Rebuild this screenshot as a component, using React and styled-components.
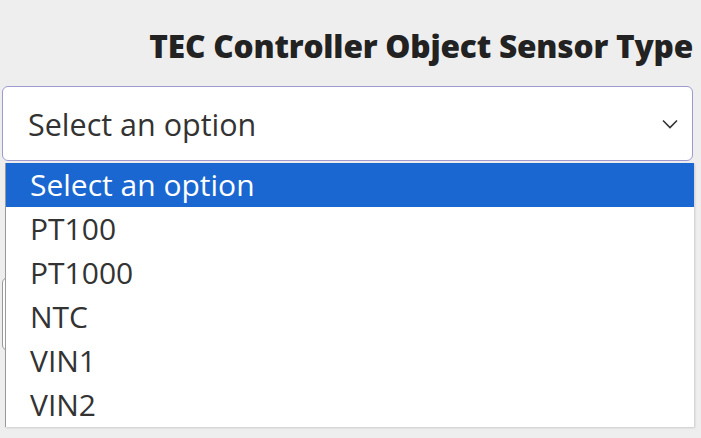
import styled, { createGlobalStyle } from 'styled-components'

const GlobalStyle = createGlobalStyle`
    html, body {
        margin: 0;
        padding: 0;
        background: #eeeeee;
        font-family: "Open Sans", "Noto Sans", sans-serif;
        overflow: hidden;
    }
`

const Page = styled.div`
    width: 701px;
    height: 438px;
    position: relative;
    box-sizing: border-box;
    padding: 27px 8px 0 2px;
`

const Title = styled.h2`
    margin: 0;
    text-align: right;
    font-size: 31.6px;
    font-weight: 800;
    letter-spacing: -0.2px;
    color: #222;
    line-height: 38px;
`

const Field = styled.div`
    position: relative;
    margin-top: 21px;
`

const SelectBox = styled.div`
    box-sizing: border-box;
    height: 75px;
    background: #fff;
    border: 1.5px solid #9e9ad0;
    border-radius: 6px;
    display: flex;
    align-items: center;
    justify-content: space-between;
    padding: 0 14px 0 25px;
    font-size: 30.5px;
    color: #333;
`

const Chevron = () => (
    <svg width="16" height="10" viewBox="0 0 16 10" fill="none">
        <path d="M1 1.5 L8 8.5 L15 1.5" stroke="#333" strokeWidth="1.6" />
    </svg>
)

const Dropdown = styled.ul`
    position: absolute;
    left: 3px;
    right: -1px;
    top: 77px;
    margin: 0;
    padding: 0;
    list-style: none;
    background: #fff;
    border-left: 1px solid #9a9a9a;
    box-shadow: 1px 1px 2px rgba(0, 0, 0, 0.15);
    z-index: 2;
`

const Option = styled.li`
    height: 44px;
    line-height: 44px;
    padding-left: 24px;
    font-size: 30px;
    color: ${p => (p.$active ? '#fff' : '#333')};
    background: ${p => (p.$active ? '#1a67d2' : 'transparent')};
`

const NextBox = styled.div`
    margin-top: 116px;
    height: 72px;
    border: 1px solid #999;
    border-radius: 6px;
    background: #fff;
`

const NextLabel = styled.div`
    text-align: right;
    font-size: 30px;
    color: #222;
    margin-top: 36px;
    line-height: 40px;
`

const options = ['Select an option', 'PT100', 'PT1000', 'NTC', 'VIN1', 'VIN2']

export default function App() {
    return (
        <>
            <GlobalStyle />
            <Page>
                <Title>TEC Controller Object Sensor Type</Title>
                <Field>
                    <SelectBox>
                        <span>Select an option</span>
                        <Chevron />
                    </SelectBox>
                    <Dropdown>
                        {options.map((o, i) => (
                            <Option key={o} $active={i === 0}>{o}</Option>
                        ))}
                    </Dropdown>
                    <NextBox />
                    <NextLabel>Sensor Wiring Config (Range, Unit, /)</NextLabel>
                </Field>
            </Page>
        </>
    )
}
